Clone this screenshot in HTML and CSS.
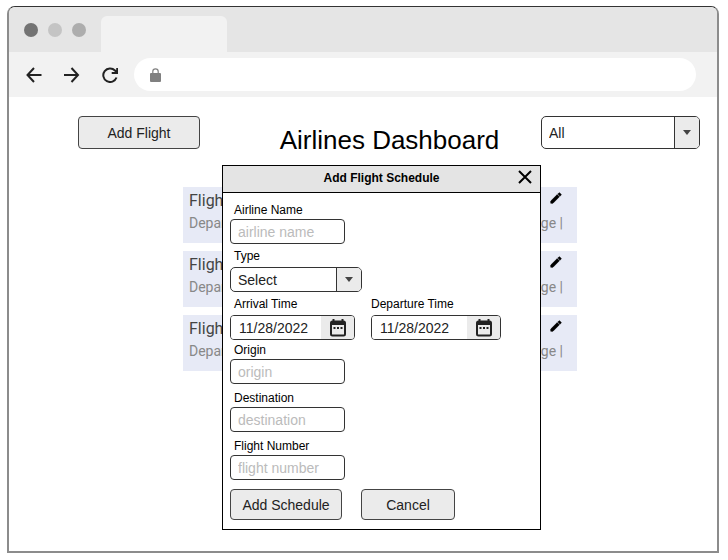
FILE: index.html
```html
<!DOCTYPE html>
<html lang="en">
<head>
<meta charset="utf-8">
<title>Airlines Dashboard</title>
<link rel="stylesheet" href="styles.css">
</head>
<body>
<svg class="sprite" aria-hidden="true">
  <symbol id="pencil" viewBox="0 0 24 24"><path d="M3 17.2V21h3.8L17.8 9.900l-3.700-3.700zM20.700 7c.4-.4.4-1 0-1.400l-2.300-2.300c-.4-.4-1-.4-1.400 0l-1.800 1.800 3.700 3.700z" fill="#000" stroke="#000"/></symbol>
  <symbol id="calendar" viewBox="0 0 16 18"><path d="M3.500 0v3M12.500 0v3" stroke="#222" stroke-width="2"/><rect x="1" y="2.500" width="14" height="14" rx="1.500" fill="none" stroke="#222" stroke-width="2"/><path d="M1 2.500h14v3.500H1z" fill="#222"/><path d="M3.500 9h2M7 9h2M10.500 9h2" stroke="#222" stroke-width="2"/></symbol>
</svg>
<div class="window">
  <div class="tabs">
    <div class="dots"><span class="dot dark"></span><span class="dot light"></span><span class="dot mid"></span></div>
    <div class="tab"></div>
  </div>
  <div class="toolbar">
    <div class="nav">
      <svg width="16" height="16" viewBox="0 0 16 16"><path d="M15.500 8H1.500M8 1L1.500 8 8 15"/></svg>
      <svg width="16" height="16" viewBox="0 0 16 16"><path d="M0 8h14M7.500 1L14 8 7.500 15"/></svg>
      <svg width="16" height="16" viewBox="0 0 16 16"><path d="M14.500 10.500A6.800 6.800 0 1 1 13 3.500L15 5.500M15.200 1v5h-5.500"/></svg>
    </div>
    <div class="address">
      <svg width="11" height="14" viewBox="0 0 11 14"><path d="M2.800 6V3.500a2.700 2.700 0 0 1 5.400 0V6" fill="none" stroke="#808080" stroke-width="1.200"/><rect y="5" width="11" height="9" rx="1" fill="#808080"/></svg>
    </div>
  </div>
  <main class="page">
    <header class="head">
      <button class="btn add" type="button">Add Flight</button>
      <h1>Airlines Dashboard</h1>
      <div class="select filter">
        <select aria-label="Airline"><option>All</option></select>
        <span class="arrow"></span>
      </div>
    </header>
    <section class="flights">
      <article class="card">
        <div class="line"><h2>Flight</h2><svg class="edit"><use href="#pencil"/></svg></div>
        <div class="line info"><span>Depart</span><span>ge |</span></div>
      </article>
      <article class="card">
        <div class="line"><h2>Flight</h2><svg class="edit"><use href="#pencil"/></svg></div>
        <div class="line info"><span>Depart</span><span>ge |</span></div>
      </article>
      <article class="card">
        <div class="line"><h2>Flight</h2><svg class="edit"><use href="#pencil"/></svg></div>
        <div class="line info"><span>Depart</span><span>ge |</span></div>
      </article>
      <form class="dialog" role="dialog" aria-labelledby="dialog-title">
        <div class="bar">
          <h2 id="dialog-title">Add Flight Schedule</h2>
          <button class="close" type="button" aria-label="Close"><svg width="14" height="14" viewBox="0 0 14 14"><path d="M1 1l12 12M13 1L1 13" stroke="#000" stroke-width="2"/></svg></button>
        </div>
        <div class="body">
          <div class="field">
            <label for="airline">Airline Name</label>
            <input class="text" id="airline" type="text" placeholder="airline name">
          </div>
          <div class="field picker">
            <label for="type">Type</label>
            <div class="select type">
              <select id="type"><option>Select</option></select>
              <span class="arrow"></span>
            </div>
          </div>
          <div class="dates">
            <div class="field picker">
              <label for="arrival">Arrival Time</label>
              <div class="date arrival">
                <input id="arrival" type="text" value="11/28/2022">
                <button type="button" aria-label="Choose arrival date"><svg width="16" height="18"><use href="#calendar"/></svg></button>
              </div>
            </div>
            <div class="field picker flush">
              <label for="departure">Departure Time</label>
              <div class="date departure">
                <input id="departure" type="text" value="11/28/2022">
                <button type="button" aria-label="Choose departure date"><svg width="16" height="18"><use href="#calendar"/></svg></button>
              </div>
            </div>
          </div>
          <div class="field tight">
            <label for="origin">Origin</label>
            <input class="text" id="origin" type="text" placeholder="origin">
          </div>
          <div class="field">
            <label for="destination">Destination</label>
            <input class="text" id="destination" type="text" placeholder="destination">
          </div>
          <div class="field">
            <label for="number">Flight Number</label>
            <input class="text" id="number" type="text" placeholder="flight number">
          </div>
          <div class="actions">
            <button class="btn submit" type="button">Add Schedule</button>
            <button class="btn cancel" type="button">Cancel</button>
          </div>
        </div>
      </form>
    </section>
  </main>
</div>
</body>
</html>
```
FILE: styles.css
```css
* { box-sizing: border-box; }
body {
  margin: 0;
  padding: 6px 9px 7px 7px;
  min-height: 100vh;
  display: flex;
  background: #fff;
  color: #222;
  font: 14px/16px "Liberation Sans", Arial, sans-serif;
}
h1, h2 { margin: 0; font-weight: 400; }
input, select, button { font: inherit; color: inherit; margin: 0; }
svg { display: block; flex: none; }
.sprite { position: absolute; width: 0; height: 0; }

.window {
  flex: 1;
  border: 2px solid #8c8c8c;
  border-top: 1px solid #333;
  border-radius: 8px 8px 0 0;
}
.tabs {
  display: flex;
  align-items: flex-end;
  height: 45px;
  padding-left: 15px;
  background: #e5e5e5;
  border-radius: 6px 6px 0 0;
}
.dots { display: flex; gap: 10px; width: 77px; align-self: center; }
.dot { width: 14px; height: 14px; border-radius: 50%; }
.dark { background: #737373; }
.light { background: #c4c4c4; }
.mid { background: #adadad; }
.tab { width: 126px; height: 36px; background: #f2f2f2; border-radius: 6px 6px 0 0; }
.toolbar {
  display: flex;
  align-items: center;
  gap: 16px;
  height: 45px;
  padding: 0 21px 0 17px;
  background: #f2f2f2;
}
.nav { display: flex; gap: 22px; }
.nav path { fill: none; stroke: #222; stroke-width: 2; }
.address {
  flex: 1;
  display: flex;
  align-items: center;
  height: 33px;
  padding-left: 16px;
  background: #fff;
  border-radius: 17px;
}

.page { padding: 19px 17px 0 69px; }
.head { display: flex; justify-content: space-between; }
.head h1 { margin-top: 8px; color: #000; font-size: 26px; line-height: 32px; }
.btn {
  padding: 0;
  border: 1px solid #444;
  border-radius: 4px;
  background: #ebebeb;
}
.add { width: 122px; height: 33px; margin-right: 38px; }
.select { position: relative; }
.select select {
  appearance: none;
  width: 100%;
  height: 100%;
  padding: 0 7px;
  border: 1px solid #333;
  border-radius: 5px;
  background: #fff;
}
.arrow {
  position: absolute;
  inset: 1px 1px 1px auto;
  width: 25px;
  display: grid;
  place-items: center;
  border-left: 1px solid #333;
  border-radius: 0 4px 4px 0;
  background: #ebebeb;
  pointer-events: none;
}
.arrow::before {
  content: "";
  border: 4px solid transparent;
  border-top: 5px solid #444;
  border-bottom: 0;
}
.filter { width: 159px; height: 33px; }

.flights {
  position: relative;
  display: grid;
  gap: 8px;
  max-width: 394px;
  margin: 31px 0 0 105px;
  font-family: Roboto, sans-serif;
}
.card { height: 56px; padding: 4px 14px 0 6px; background: #e7eaf6; }
.line { display: flex; justify-content: space-between; }
.card h2 { color: #444; font-size: 16px; line-height: 20px; }
.edit { width: 14px; height: 14px; }
.info { margin-top: 2px; color: #888; line-height: 20px; }

.dialog {
  position: absolute;
  top: -22px;
  left: 39px;
  width: 319px;
  border: 1px solid #000;
  background: #fff;
  font-family: "Liberation Sans", Arial, sans-serif;
}
.bar {
  position: relative;
  height: 27px;
  border-bottom: 1px solid #000;
  background: #e4e4e4;
}
.bar h2 {
  color: #000;
  font-size: 12px;
  font-weight: 700;
  line-height: 24px;
  text-align: center;
}
.close {
  position: absolute;
  top: 4px;
  right: 8px;
  padding: 0;
  border: 0;
  background: none;
}
.body { padding: 3px 7px 9px; }
.field { margin-top: 6px; }
.field label {
  display: block;
  padding-left: 4px;
  color: #000;
  font-size: 12px;
  line-height: 17px;
}
.picker { margin-top: 4px; }
.picker label { margin-bottom: 2px; }
.flush label { padding-left: 0; }
.tight { margin-top: 2px; }
.text {
  display: block;
  width: 115px;
  height: 25px;
  padding: 1px 7px 0;
  border: 1px solid #333;
  border-radius: 4px;
}
.text::placeholder { color: #bbb; }
.type { width: 132px; height: 25px; }
.dates { display: flex; gap: 16px; }
.date {
  display: flex;
  height: 25px;
  overflow: hidden;
  border: 1px solid #333;
  border-radius: 4px;
}
.date input { flex: 1; min-width: 0; padding: 0 0 0 8px; border: 0; }
.date button {
  display: grid;
  place-items: center;
  width: 33px;
  padding: 0;
  border: 0;
  background: #ebebeb;
}
.arrival { width: 125px; }
.departure { width: 130px; }
.actions { display: flex; gap: 19px; margin-top: 9px; }
.actions .btn { height: 31px; }
.submit { width: 112px; }
.cancel { width: 94px; }
```
